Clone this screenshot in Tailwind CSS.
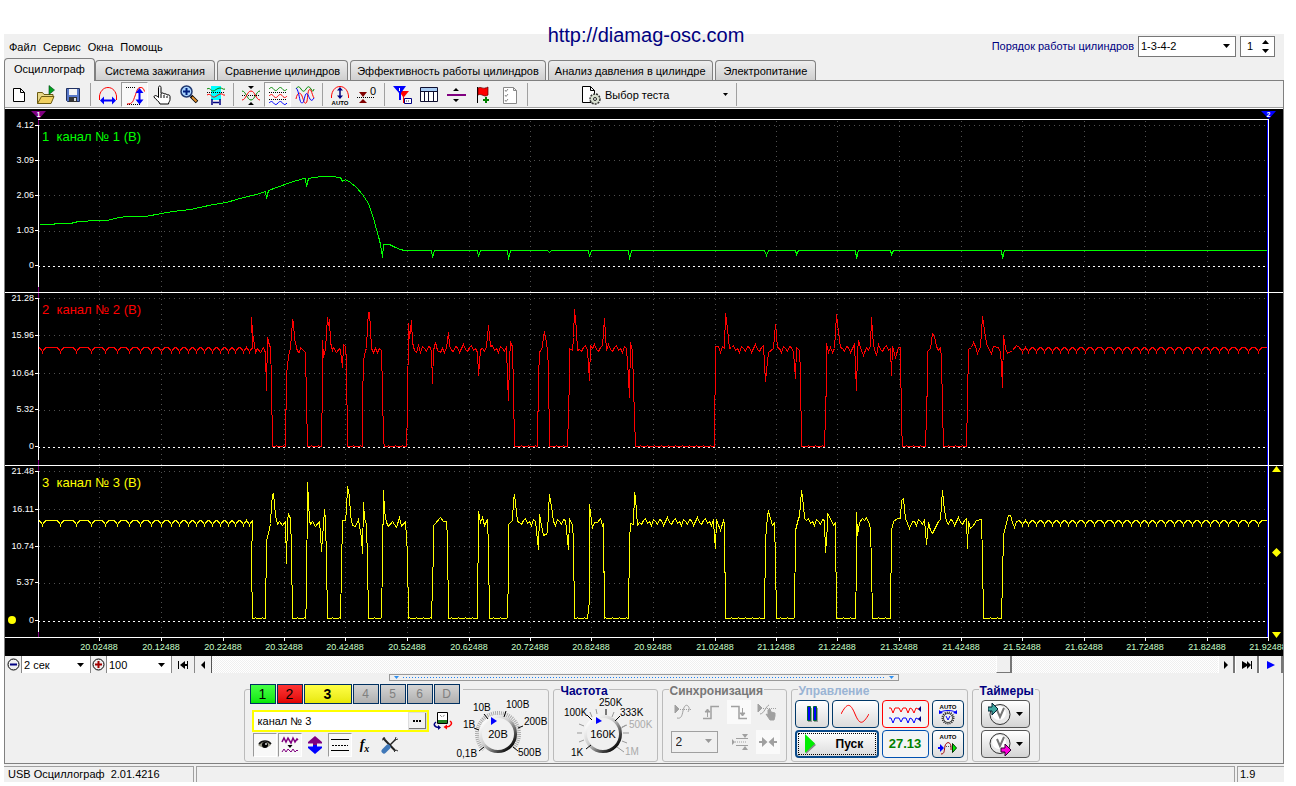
<!DOCTYPE html>
<html lang="ru">
<head>
<meta charset="utf-8">
<title>USB Осциллограф</title>
<script src="https://cdn.jsdelivr.net/npm/@tailwindcss/browser@4"></script>
</head>
<body class="bg-white font-['Liberation_Sans',sans-serif] text-[11px] leading-4 text-black">
<div class="relative flex min-h-screen flex-col pt-[34px] pr-3 pb-[5px] pl-1">
  <a href="http://diamag-osc.com" class="absolute top-6 right-1 left-0 z-10 mx-auto w-fit text-xl leading-[22px] text-[#000080]">http://diamag-osc.com</a>
  <div class="flex flex-1 flex-col bg-[#f0f0f0]">

    <!-- Menu and firing order -->
    <header class="flex h-6 items-center justify-between">
      <nav class="flex gap-[7px] pt-0.5 pl-[5px]">
        <button type="button">Файл</button><button type="button">Сервис</button><button type="button">Окна</button><button type="button">Помощь</button>
      </nav>
      <div class="flex items-center gap-1 pr-[9px]">
        <label for="order" class="text-[#000080]">Порядок работы цилиндров</label>
        <div class="relative">
          <select id="order" class="h-[21px] w-[98px] appearance-none border border-[#777] bg-white px-0.5 text-[11px]"><option>1-3-4-2</option></select>
          <svg class="pointer-events-none absolute top-2 right-1.5 h-1 w-[7px]" viewBox="0 0 7 4"><path d="M0 0h7L3.500 4z"/></svg>
        </div>
        <div class="relative">
          <input id="cyl" aria-label="Цилиндр" value="1" class="h-[21px] w-[35px] border border-[#777] bg-white pl-1.5 text-[11px]">
          <svg class="pointer-events-none absolute top-1 right-1.5 h-3.5 w-[7px]" viewBox="0 0 7 14"><path d="M0 4h7L3.500 0zM0 9h7l-3.500 4z"/></svg>
        </div>
      </div>
    </header>

    <!-- Tabs -->
    <div role="tablist" class="flex h-[23px] items-end gap-0.5 border-b border-[#808080]">
      <button role="tab" aria-selected="true" class="-mr-0.5 -mb-px h-[23px] rounded-t-sm border border-b-0 border-[#808080] bg-[#f0f0f0] px-[9px] pb-0.5">Осциллограф</button>
      <button role="tab" class="h-5 rounded-t-sm border border-b-0 border-[#808080] bg-linear-to-b from-[#eee] to-[#cfcfcf] px-[9px]">Система зажигания</button>
      <button role="tab" class="h-5 rounded-t-sm border border-b-0 border-[#808080] bg-linear-to-b from-[#eee] to-[#cfcfcf] px-[7px]">Сравнение цилиндров</button>
      <button role="tab" class="h-5 rounded-t-sm border border-b-0 border-[#808080] bg-linear-to-b from-[#eee] to-[#cfcfcf] px-1.5">Эффективность работы цилиндров</button>
      <button role="tab" class="h-5 rounded-t-sm border border-b-0 border-[#808080] bg-linear-to-b from-[#eee] to-[#cfcfcf] px-1.5">Анализ давления в цилиндре</button>
      <button role="tab" class="h-5 rounded-t-sm border border-b-0 border-[#808080] bg-linear-to-b from-[#eee] to-[#cfcfcf] px-2">Электропитание</button>
    </div>

    <div class="flex flex-1 flex-col border-x border-[#808080]">
    <!-- Toolbar -->
    <div role="toolbar" class="flex h-7 items-center border-b border-white shadow-[inset_0_-1px_0_#a0a0a0]">
      <button aria-label="Новый" class="flex h-[25px] w-[27px] items-center justify-center"><svg class="h-6 w-6" viewBox="0 0 24 24"><path d="M6.500 5.500h7l4 4v9h-11zM13.500 5.500v4h4" fill="#fff" stroke="#000"/></svg></button>
      <button aria-label="Открыть" class="flex h-[25px] w-[27px] items-center justify-center"><svg class="h-6 w-6" viewBox="0 0 24 24"><path d="M3.500 20.500v-11h5l1.500 2h9v3" fill="#e8d888" stroke="#6b5a10"/><path d="M3.500 20.500l4-7h12.500l-3 7z" fill="#f0d060" stroke="#6b5a10"/><path d="M15 2.500v9l5.500-4.500z" fill="#00a020" stroke="#004010" stroke-width=".6"/></svg></button>
      <button aria-label="Сохранить" class="flex h-[25px] w-[27px] items-center justify-center"><svg class="h-6 w-6" viewBox="0 0 24 24"><path d="M5.500 5.500h13v13h-12l-1-1z" fill="#5878c8" stroke="#203060"/><path d="M8 6h8v6H8z" fill="#f4f4f4"/><path d="M8 14h8v5H8z" fill="#333"/><path d="M13 15h2v3h-2z" fill="#ddd"/></svg></button>
      <i class="mr-[3px] ml-1 h-[23px] w-px bg-[#a0a0a0]"></i>
      <button aria-label="Развертка" class="flex h-[25px] w-[27px] items-center justify-center"><svg class="h-6 w-6" viewBox="0 0 24 24" fill="none"><path d="M3.500 17v-4c.5-4 3.500-8.500 8.500-8.500s8 4.500 8.500 8.500v4" stroke="red"/><path d="M7 17.500h10" stroke="#00f" stroke-width="2"/><path d="M4 17.500l4-4v8zM20 17.500l-4-4v8z" fill="#00f"/></svg></button>
      <button aria-label="Усиление" aria-pressed="true" class="flex h-[25px] w-[27px] items-center justify-center border border-[#999] border-r-white border-b-white bg-[#f8f8f8]"><svg class="h-6 w-6 shrink-0" viewBox="0 0 24 24" fill="none"><path d="M3 4.500h9M4 21.500h14" stroke="#000" stroke-dasharray="1 1"/><path d="M4 21c6 0 6-3 8-8s2-8 5-8.500 4 2 4.500 4" stroke="red"/><path d="M16.500 9v8" stroke="#00f" stroke-width="2"/><path d="M16.500 5l4 5h-8zM16.500 21.500l4-5h-8z" fill="#00f"/></svg></button>
      <button aria-label="Рука" class="flex h-[25px] w-[27px] items-center justify-center"><svg class="h-6 w-6" viewBox="0 0 24 24"><path d="M8.500 14.500v-10c0-2 2.500-2 2.500 0v6c1-1 3-.5 3 .5 1-.5 3 0 3 1 1.500-.5 3 0 3 1.500v3c0 2-1.500 2.500-1.500 4.500h-8.500c-1-3-4.500-4.500-6-7 0-2 2.500-2 4.500.5z" fill="#fff" stroke="#000"/><path d="M11 11v4M14 12v3M17 13v2" stroke="#000"/></svg></button>
      <button aria-label="Масштаб" class="flex h-[25px] w-[27px] items-center justify-center"><svg class="h-6 w-6" viewBox="0 0 24 24"><path d="M14 13l6 6" stroke="#000" stroke-width="3.500"/><path d="M15 14l4.500 4.500" stroke="#e09030" stroke-width="2"/><circle cx="9.500" cy="8.500" r="5.500" fill="#a8d4ff" stroke="#203870" stroke-width="1.500"/><path d="M6 8.500h7M9.500 5v7" stroke="#002080" stroke-width="2"/></svg></button>
      <button aria-label="Фрагмент" class="flex h-[25px] w-[27px] items-center justify-center"><svg class="h-6 w-6" viewBox="0 0 24 24" fill="none"><path d="M7 3h10v14H7z" fill="#0ff"/><path d="M3 6c3-2 4 2 6 2s4-3 7-3 3 2 5 1" stroke="#080"/><path d="M3 9.500h18" stroke="#000" stroke-dasharray="1 1"/><path d="M3 12c3-2 4 1 6 2s4-2 7-3 3 2 5 1" stroke="red"/><path d="M8 16v6M16 16v6M9 19.500h6" stroke="#000080" stroke-width="1.500"/></svg></button>
      <i class="mr-[3px] ml-1 h-[23px] w-px bg-[#a0a0a0]"></i>
      <button aria-label="Центр" class="flex h-[25px] w-[27px] items-center justify-center"><svg class="h-6 w-6" viewBox="0 0 24 24" fill="none"><path d="M3 12.500h18" stroke="#000" stroke-dasharray="1 1"/><path d="M3 8c4 0 5 9 9 9s5-9 9-9" stroke="#080"/><path d="M3 17c4 0 5-9 9-9s5 9 9 9" stroke="red"/><path d="M9 3h6l-3 3zM9 22h6l-3-3z" fill="#000"/></svg></button>
      <button aria-label="Раздельно" aria-pressed="true" class="flex h-[25px] w-[27px] items-center justify-center border border-[#999] border-r-white border-b-white bg-[#f8f8f8]"><svg class="h-6 w-6 shrink-0" viewBox="0 0 24 24" fill="none"><path d="M3 6c2-2 3-2 4.500 0s3 2 4.500 0 3-2 4.500 0 3 2 4.500 0" stroke="#080"/><path d="M3 9.500h18M3 16.500h18" stroke="#000" stroke-dasharray="1 1"/><path d="M3 13c2-2 3-2 4.500 0s3 2 4.500 0 3-2 4.500 0 3 2 4.500 0" stroke="red"/><path d="M3 20c2-2 3-2 4.500 0s3 2 4.500 0 3-2 4.500 0 3 2 4.500 0" stroke="#00f"/></svg></button>
      <button aria-label="Наложение" class="flex h-[25px] w-[27px] items-center justify-center"><svg class="h-6 w-6" viewBox="0 0 24 24" fill="none"><path d="M3 6c2-3 3-3 5 0s3 3 5 0 3-3 5 0 2 3 3 0" stroke="#080"/><path d="M3 16c1-6 4-8 6-3s2 8 4 7 1-10 3-13 3 5 5 8" stroke="red"/><path d="M3 5c2 1 3 8 4 12s3 4 4 0 2-9 4-5 3 8 6 3" stroke="#00f"/></svg></button>
      <i class="mr-[3px] ml-1 h-[23px] w-px bg-[#a0a0a0]"></i>
      <button aria-label="Авто" class="flex h-[25px] w-[27px] items-center justify-center"><svg class="h-6 w-6" viewBox="0 0 24 24" fill="none"><path d="M3.500 15v-2c.5-5 3.500-9.500 8.500-9.500s8 4.500 8.500 9.500v2" stroke="red"/><path d="M12 6v8" stroke="#000080" stroke-width="1.500"/><path d="M12 4l3 3.500H9zM12 16l3-3.500H9z" fill="#000080"/><text x="12" y="22" font-size="6" font-weight="bold" text-anchor="middle" fill="#000">AUTO</text></svg></button>
      <button aria-label="Ноль" class="flex h-[25px] w-[27px] items-center justify-center"><svg class="h-6 w-6" viewBox="0 0 24 24"><path d="M4 9h8l-4 5zM4 20h8l-4-4z" fill="#800000"/><path d="M2 14.500h18" stroke="#000" stroke-dasharray="1 1"/><text x="15" y="12" font-size="11" fill="#000">0</text></svg></button>
      <i class="mr-[3px] ml-1 h-[23px] w-px bg-[#a0a0a0]"></i>
      <button aria-label="Фильтр" class="flex h-[25px] w-[27px] items-center justify-center"><svg class="h-6 w-6" viewBox="0 0 24 24"><path d="M9 8h10l-5 6v6h-1v-6z" fill="red"/><path d="M3 3h13l-5 7v7H9v-7z" fill="#00f"/><path d="M9.500 5v3" stroke="#fff"/><path d="M14.500 15.500h7v5h-7z" fill="#fff" stroke="#000080"/><path d="M16 18h4" stroke="#444" stroke-dasharray="1 1"/></svg></button>
      <button aria-label="Таблица" class="flex h-[25px] w-[27px] items-center justify-center"><svg class="h-6 w-6" viewBox="0 0 24 24"><path d="M3.500 4.500h17v14h-17z" fill="#fff" stroke="#101030"/><path d="M4 5h16v3H4z" fill="#a8ccf4"/><path d="M3 8.500h18M7.500 8v10M11.500 8v10M16.500 8v10" stroke="#101030"/></svg></button>
      <button aria-label="Разделить" class="flex h-[25px] w-[27px] items-center justify-center"><svg class="h-6 w-6" viewBox="0 0 24 24"><path d="M3 12h19" stroke="#800080" stroke-width="2"/><path d="M9 8h6l-3-3zM9 16h6l-3 3z"/></svg></button>
      <button aria-label="Метка" class="flex h-[25px] w-[27px] items-center justify-center"><svg class="h-6 w-6" viewBox="0 0 24 24"><path d="M6.500 4v16" stroke="#000"/><path d="M7 5c3-2 5 2 10-1v8c-4 3-6-2-10 0z" fill="red" stroke="#500" stroke-width=".7"/><path d="M15 14v6M12 17h6" stroke="#008000" stroke-width="2"/></svg></button>
      <button aria-label="Протокол" class="flex h-[25px] w-[27px] items-center justify-center"><svg class="h-6 w-6" viewBox="0 0 24 24" fill="none"><path d="M5.500 4.500h10l3 3v13h-13zM15.500 4.500v3h3" fill="#fff" stroke="#888"/><path d="M7 7l1 1.500 2-2.500M7 12l1 1.500 2-2.500M7 17l1 1.500 2-2.500" stroke="#888"/></svg></button>
      <i class="mr-[3px] ml-1 h-[23px] w-px bg-[#a0a0a0]"></i>
      <button class="ml-10 flex h-[25px] w-[165px] items-center gap-0.5 pl-2"><svg class="h-6 w-6" viewBox="0 0 24 24"><path d="M3.500 3.500h8l4 4v12h-12zM11.500 3.500v4h4" fill="#fff" stroke="#000"/><circle cx="16" cy="16" r="5" fill="#d8e0d0" stroke="#333" stroke-width="1.500" stroke-dasharray="2 1"/><circle cx="16" cy="16" r="1.500" fill="#fff" stroke="#222"/></svg>Выбор теста<svg class="mr-2 ml-auto h-[3px] w-[5px]" viewBox="0 0 5 3"><path d="M0 0h5L2.500 3z"/></svg></button>
      <i class="h-[23px] w-px bg-[#a0a0a0]"></i>
    </div>

    <!-- Oscilloscope display -->
    <div id="scope" class="grid min-h-[547px] flex-1 grid-cols-[33px_1fr_14px] grid-rows-[11fr_173fr_173fr_172fr_18fr] overflow-hidden bg-black text-[9px] leading-3 text-white">
      <div></div>
      <div class="relative border-b border-white">
        <svg class="absolute top-0.5 -left-2 h-[9px] w-4" viewBox="0 0 16 9"><path d="M1 0h15l-7 8z" fill="#800080"/><text x="8.500" y="6" font-size="7" font-weight="bold" text-anchor="middle" fill="#fff">1</text></svg>
        <svg class="absolute top-0.5 -right-2 h-[9px] w-4" viewBox="0 0 16 9"><path d="M0 0h15l-7 8z" fill="#00f"/><text x="7.500" y="6" font-size="7" font-weight="bold" text-anchor="middle" fill="#fff">2</text></svg>
      </div>
      <div></div>
    </div>

    <!-- Zoom and scroll -->
    <div class="flex h-[17px] items-stretch bg-[#f0f0f0]">
      <button aria-label="Уменьшить" class="flex w-[17px] items-center justify-center border-r border-[#888]"><svg class="h-[15px] w-[15px]" viewBox="0 0 15 15"><circle cx="7.500" cy="7.500" r="5.500" fill="#f0f0f0" stroke="#000"/><path d="M4 7.500h7" stroke="#000080" stroke-width="2"/></svg></button>
      <div class="relative w-[68px]"><select aria-label="Развертка" class="h-full w-full appearance-none bg-white px-0.5 text-[11px]"><option>2 сек</option></select><svg class="pointer-events-none absolute top-[7px] right-1.5 h-1 w-[7px]" viewBox="0 0 7 4"><path d="M0 0h7L3.500 4z"/></svg></div>
      <button aria-label="Увеличить" class="flex w-[17px] items-center justify-center border-x border-[#888]"><svg class="h-[15px] w-[15px]" viewBox="0 0 15 15"><circle cx="7.500" cy="7.500" r="5.500" fill="#f0f0f0" stroke="#000"/><path d="M4 7.500h7M7.500 4v7" stroke="#a00000" stroke-width="2"/></svg></button>
      <div class="relative w-[64px]"><select aria-label="Масштаб" class="h-full w-full appearance-none bg-white px-0.5 text-[11px]"><option>100</option></select><svg class="pointer-events-none absolute top-[7px] right-1.5 h-1 w-[7px]" viewBox="0 0 7 4"><path d="M0 0h7L3.500 4z"/></svg></div>
      <button aria-label="В начало" class="flex w-6 items-center justify-center border-r border-l border-[#888]"><svg class="h-2 w-3" viewBox="0 0 12 8"><path d="M1 0h1v8H1zM3 4l5-4v3h3v2H8v3zM10 0h1v8h-1z"/></svg></button>
      <button aria-label="Назад" class="flex w-[17px] items-center justify-center border-r border-[#555]"><svg class="h-2 w-1" viewBox="0 0 4 8"><path d="M4 0v8L0 4z"/></svg></button>
      <div class="flex flex-1 justify-end bg-[repeating-conic-gradient(#fff_0_25%,#efefef_0_50%)] bg-[length:2px_2px] pr-[206px]">
        <button aria-label="Ползунок" class="w-4 border-r-2 border-b border-l border-[#777] border-l-white bg-[#f0f0f0]"></button>
      </div>
      <button aria-label="Вперед" class="flex w-[17px] items-center justify-center border-r-2 border-l border-[#777] border-l-white"><svg class="h-2 w-1" viewBox="0 0 4 8"><path d="M0 0v8L4 4z"/></svg></button>
      <button aria-label="В конец" class="flex w-6 items-center justify-center border-r-2 border-l border-[#777] border-l-white"><svg class="h-2 w-3" viewBox="0 0 12 8"><path d="M10 0h1v8h-1zM1 0l5 3V0l4 4-4 4V5L1 8z"/></svg></button>
      <button aria-label="Воспроизвести" class="flex w-6 items-center justify-center border-r-2 border-l border-[#777] border-l-white"><svg class="h-2 w-2" viewBox="0 0 8 8"><path d="M0 0v8l8-4z" fill="#00f"/></svg></button>
    </div>

    <!-- Panel splitter -->
    <button aria-label="Свернуть панель" class="mx-auto mt-px flex h-[7px] w-[510px] items-center border border-[#999] px-1"><svg class="h-[3px] w-[5px]" viewBox="0 0 5 3"><path d="M0 0h5L2.500 3z" fill="#2e8ff0"/></svg><i class="mx-1 h-px flex-1 bg-[repeating-linear-gradient(90deg,#1e80f0_0_1px,transparent_1px_3px)]"></i><svg class="h-[3px] w-[5px]" viewBox="0 0 5 3"><path d="M0 0h5L2.500 3z" fill="#2e8ff0"/></svg></button>

    <!-- Control panel -->
    <div class="flex justify-center gap-1 pt-2 pr-[5px] pb-px">
      <fieldset aria-label="Каналы" class="relative flex h-[73px] rounded-[3px] border border-[#bbb]">
        <div class="-mt-1.5 w-[218px] pl-[5px]">
          <div class="flex gap-px bg-[#f0f0f0]">
            <button class="h-5 w-[26px] border border-[#003060] bg-linear-to-b from-[#44ff44] to-[#00e800] text-sm leading-4">1</button>
            <button class="h-5 w-[26px] border border-[#003060] bg-linear-to-b from-[#f33] to-[#e00000] text-sm leading-4">2</button>
            <button class="h-5 w-12 border border-[#003060] bg-linear-to-b from-[#ff4] to-[#e8e800] text-sm leading-4 font-bold">3</button>
            <button class="h-5 w-[26px] border border-[#003060] bg-linear-to-b from-[#d4d4d4] to-[#b0b0b0] text-xs leading-4 text-[#808080]">4</button>
            <button class="h-5 w-[26px] border border-[#003060] bg-linear-to-b from-[#d4d4d4] to-[#b0b0b0] text-xs leading-4 text-[#808080]">5</button>
            <button class="h-5 w-[26px] border border-[#003060] bg-linear-to-b from-[#d4d4d4] to-[#b0b0b0] text-xs leading-4 text-[#808080]">6</button>
            <button class="h-5 w-[26px] border border-[#003060] bg-linear-to-b from-[#d4d4d4] to-[#b0b0b0] text-xs leading-4 text-[#808080]">D</button>
          </div>
          <div class="mt-1.5 flex items-center gap-1 pl-0.5">
            <div class="flex h-[22px] w-[177px] items-center border-2 border-[#ff0] bg-white pr-px">
              <input aria-label="Имя канала" value="канал № 3" class="w-full min-w-0 flex-1 bg-white pl-1 text-[11px]">
              <button aria-label="Выбрать" class="flex h-4 w-[17px] shrink-0 items-center justify-center gap-px border-r border-b border-[#777] bg-[#f0f0f0] shadow-[0_0_0_1px_#ddd]"><i class="h-0.5 w-0.5 bg-black"></i><i class="h-0.5 w-0.5 bg-black"></i><i class="h-0.5 w-0.5 bg-black"></i></button>
            </div>
            <button aria-label="Сменить"><svg class="h-5 w-5" viewBox="0 0 20 20" fill="none"><path d="M4.500 1.500h10v11h-10z" fill="#fff" stroke="#000"/><path d="M5 9h9v3H5z" fill="#208020"/><path d="M7 4l2 2 3-2" stroke="#555" stroke-dasharray="1 1"/><path d="M3 11c-3 2-2 5 3 5.500" stroke="#000080" stroke-width="1.500"/><path d="M5 14l3 2.500-3 2.500z" fill="#000080"/><path d="M17 10c3 2 1 5.500-4 6" stroke="red" stroke-width="1.500"/><path d="M14 13.500l-3.500 2.500 3.500 2.500z" fill="red"/></svg></button>
          </div>
          <div class="mt-px flex gap-px pl-[3px]">
            <button aria-label="Показать" aria-pressed="true" class="flex h-6 w-6 items-center justify-center border border-[#999] border-r-white border-b-white bg-[#f8f8f8]"><svg class="h-4 w-4" viewBox="0 0 16 16"><path d="M1 8c2-4 10-5 13-1-1 4-8 5-13 1z" fill="#998"/><path d="M2 7c3-4 9-4 12 0" fill="none" stroke="#111" stroke-width="1.500"/><circle cx="8" cy="8" r="3"/><circle cx="9" cy="7" r="1" fill="#ddd"/></svg></button>
            <button aria-label="Сигнал" aria-pressed="true" class="flex h-6 w-6 items-center justify-center border border-[#999] border-r-white border-b-white bg-[#f8f8f8]"><svg class="h-[18px] w-[18px]" viewBox="0 0 18 18" fill="none"><path d="M1 6l2-4 2 4 2-4 3 5 2-5 2 4 2-3 1 1" stroke="#800080" stroke-width="1.500"/><path d="M1 16l2-3 2 3 2-3 3 3 2-3 2 3 2-2 1 1" stroke="#800080"/><path d="M6.500 9h5L9 12z" fill="#000"/></svg></button>
            <button aria-label="Смещение" class="flex h-6 w-6 items-center justify-center"><svg class="h-5 w-4" viewBox="0 0 16 20"><path d="M8 1l7 6v1.500H10V10H6V8.500H1V7z" fill="#800080"/><path d="M8 19l7-6v-1.500H10V10H6v1.500H1V13z" fill="#00f"/></svg></button>
            <button aria-label="Линии" aria-pressed="true" class="flex h-6 w-6 items-center justify-center border border-[#999] border-r-white border-b-white bg-[#f8f8f8]"><svg class="h-4 w-[18px]" viewBox="0 0 18 16" stroke="#000"><path d="M0 2.500h18M0 13.500h18"/><path d="M1 8.500h16" stroke-dasharray="2 1"/></svg></button>
            <button aria-label="Функция" class="h-6 w-6 font-['Liberation_Serif',serif] text-sm leading-4 font-bold italic">f<sub class="text-[10px]">x</sub></button>
            <button aria-label="Настройка" class="flex h-6 w-6 items-center justify-center"><svg class="h-[18px] w-[18px]" viewBox="0 0 18 18" fill="none"><path d="M2 2l12 12.500" stroke="#222" stroke-width="2"/><path d="M8 10l7-7" stroke="#222" stroke-width="1.500"/><path d="M15 1l-1 3 3-1M1 4l3-1-1-2M13 16l2-2 2 1" stroke="#333"/><path d="M3 15l4-4" stroke="#4078b8" stroke-width="5" stroke-linecap="round"/></svg></button>
          </div>
        </div>
        <svg class="h-[71px] w-[85px]" viewBox="463 690 85 71" font-size="10">
          <defs><linearGradient id="rim" x1="0" y1="0" x2="1" y2="1"><stop offset=".1" stop-color="#fff"/><stop offset=".45" stop-color="#ccc"/><stop offset=".9" stop-color="#000"/></linearGradient></defs>
          <circle cx="498" cy="734" r="21" fill="none" stroke="#aaa" stroke-width="4" stroke-dasharray="1 1" pathLength="132"/>
          <path d="M478 757l10-13 21 0 12 12v5h-43z" fill="#f0f0f0"/>
          <circle cx="498" cy="734" r="17.500" fill="#f0f0f0" stroke="url(#rim)" stroke-width="3"/>
          <path d="M491 717v8l6-4z" fill="#00f"/>
          <path d="M479 751l5-4M474 728l5 2M484 714l4 5M506 711l-2 6M523 726l-5 2M518 751l-5-4" stroke="#000"/>
          <text x="498" y="738" font-size="11" text-anchor="middle">20В</text>
          <text x="473" y="711">10В</text><text x="506" y="708">100В</text><text x="463" y="728">1В</text><text x="524" y="725">200В</text><text x="518" y="756">500В</text>
        </svg>
        <span class="absolute bottom-0 left-[212px] text-[10px] leading-[14px]">0,1В</span>
      </fieldset>

      <fieldset class="relative h-[73px] rounded-[3px] border border-[#bbb]">
        <legend class="absolute -top-[5px] left-1.5 bg-[#f0f0f0] px-px text-xs leading-3 font-bold text-[#000080]">Частота</legend>
        <svg class="relative h-[71px] w-[103px]" viewBox="553 690 103 71" font-size="10">
          <g stroke="#999"><path d="M578 742l5-2M576 733h5M578 724l5 2M589 712l2 5M595 709l1 5M613 712l-2 5M621 741l5 2M622 733h6M621 727l5-2M616 747l7 5M619 729l6-4"/></g>
          <circle cx="602" cy="734" r="17.500" fill="#f0f0f0" stroke="url(#rim)" stroke-width="3"/>
          <path d="M595 717v7l6-3z" fill="#00f"/>
          <path d="M585 749l5-4M586 715l5 5M605 709v6M619 716l-5 5" stroke="#000"/>
          <text x="602" y="738" font-size="11" text-anchor="middle">160K</text>
          <text x="598" y="706">250K</text><text x="563" y="716">100K</text><text x="619" y="716">333K</text><text x="628" y="728" fill="#aaa">500K</text><text x="624" y="755" fill="#aaa">1M</text><text x="570" y="756">1K</text>
        </svg>
      </fieldset>

      <fieldset class="relative h-[73px] w-[125px] rounded-[3px] border border-[#bbb] pt-2.5 pl-2">
        <legend class="absolute -top-[5px] left-1.5 bg-[#f0f0f0] px-px text-xs leading-3 font-bold text-[#777]">Синхронизация</legend>
        <div class="flex gap-1">
          <button disabled aria-label="Уровень" class="flex h-6 w-6 items-center justify-center"><svg class="h-5 w-[18px]" viewBox="0 0 18 20" fill="none" stroke="#a0a0a0"><path d="M1 3v8l4-4z" fill="#a0a0a0"/><path d="M4 7.500h14" stroke-dasharray="1 1"/><path d="M3 16c4 1 5-2 6-7s3-7 5-5 1 4 0 6"/></svg></button>
          <button disabled aria-label="Фронт" class="flex h-6 w-6 items-center justify-center"><svg class="h-4 w-[18px]" viewBox="0 0 18 16" fill="none" stroke="#a0a0a0"><path d="M1 14.500h8V2.500h8" stroke-width="1.500"/><path d="M5.500 13V6M3 8l2.500-3L8 8z" fill="#a0a0a0"/></svg></button>
          <button disabled aria-label="Спад" class="flex h-6 w-6 items-center justify-center bg-[#fafafa]"><svg class="h-4 w-[18px]" viewBox="0 0 18 16" fill="none" stroke="#a0a0a0"><path d="M1 2.500h8v12h8" stroke-width="1.500"/><path d="M12.500 4v7M10 9l2.500 3L15 9z" fill="#a0a0a0"/></svg></button>
          <button disabled aria-label="Вручную" class="flex h-6 w-6 items-center justify-center"><svg class="h-5 w-5" viewBox="0 0 20 20" fill="none" stroke="#a0a0a0"><path d="M1 2v8l4-4z" fill="#a0a0a0"/><path d="M4 6.500h15" stroke-dasharray="1 1"/><path d="M3 12c4 0 6-8 9-9"/><path d="M11 8v5l-2-1 4 6h4l1-4v-3l-4-1-1-3z" fill="#a0a0a0"/></svg></button>
        </div>
        <div class="mt-1.5 flex items-center gap-2.5">
          <div class="relative"><select aria-label="Канал синхронизации" class="block h-[22px] w-[47px] appearance-none border border-[#a0a0a0] bg-[#f0f0f0] pl-1 text-xs text-[#222]"><option>2</option></select><svg class="pointer-events-none absolute top-2 right-1.5 h-1 w-[7px]" viewBox="0 0 7 4"><path d="M0 0h7L3.500 4z" fill="#999"/></svg></div>
          <div class="flex gap-1">
            <button disabled aria-label="Диапазон" class="flex h-6 w-6 items-center justify-center"><svg class="h-4 w-[18px]" viewBox="0 0 18 16" fill="#a0a0a0" stroke="#a0a0a0"><path d="M1 5v6l3-3zM11 0h6l-3 4zM11 16h6l-3-4z" stroke="none"/><path d="M5 4.500h12M5 11.500h12"/><path d="M4 8h12" stroke-dasharray="1 1"/></svg></button>
            <button disabled aria-label="Центр" class="flex h-6 w-6 items-center justify-center bg-[#fafafa]"><svg class="h-3 w-[18px]" viewBox="0 0 18 12"><path d="M0 5h3V1l5.500 5L3 11V7H0zM18 5h-3V1L9.500 6l5.500 5V7h3z" fill="#a0a0a0"/></svg></button>
          </div>
        </div>
      </fieldset>

      <fieldset class="relative h-[73px] rounded-[3px] border border-[#bbb] px-[3px] pt-2.5">
        <legend class="absolute -top-[5px] left-1.5 bg-[#f0f0f0] px-px text-xs leading-3 font-bold text-[#9ab4d4]">Управление</legend>
        <div class="grid grid-cols-[34px_47px_47px_32px] gap-x-[3px] gap-y-0.5">
          <button aria-label="Пауза" class="flex h-7 items-center justify-center rounded-sm border border-[#003868] bg-linear-to-b from-white to-[#dcdcdc]"><svg class="h-4 w-3" viewBox="0 0 12 16"><path d="M2 2h4v14H2zM8 2h4v14H8z" fill="#999"/><path d="M1.500.5h3v14h-3zM7.500.5h3v14h-3z" fill="#00f" stroke="#063"/></svg></button>
          <button aria-label="Однократно" class="flex h-7 items-center justify-center rounded-sm border border-[#003868] bg-linear-to-b from-white to-[#dcdcdc]"><svg class="h-5 w-7" viewBox="0 0 28 20"><path d="M0 10C6-1 9-2 14 10s8 10 14 0" fill="none" stroke="red"/></svg></button>
          <button aria-label="Поток" class="flex h-7 items-center justify-center rounded-sm border border-[red] bg-[#f4f4f4]"><svg class="h-5 w-8" viewBox="0 0 32 20" fill="none"><path d="M0 4h2l2 5 2-5h4l2 4 2-4h3l2 5 2-5 2 1 2 4 2-5 2 1 2 0" stroke="red"/><path d="M0 14h2l2 5 2-5h4l2 4 2-4h3l2 5 2-5 2 1 2 4 2-5 2 1 2 0" stroke="#00f"/><path d="M32 2v6l-3-3zM32 12v6l-3-3z" fill="#000080"/></svg></button>
          <button aria-label="Авто усиление" class="flex h-7 items-center justify-center rounded-sm border border-[#003868] bg-linear-to-b from-white to-[#dcdcdc]"><svg class="h-6 w-5" viewBox="0 0 20 24" fill="none"><text x="10" y="7" font-size="6" font-weight="bold" text-anchor="middle" fill="#000">AUTO</text><circle cx="10" cy="16" r="5.500" stroke="#222" stroke-width="2" stroke-dasharray="1 1"/><circle cx="10" cy="16" r="4.500" fill="#f0f0f0" stroke="#444"/><path d="M8 14l2 4 2-4M3 10c3-2 11-2 14 0" stroke="#00f"/><path d="M1 12V8l4 3zM19 12V8l-4 3z" fill="#00f"/></svg></button>
          <button class="col-span-2 flex h-7 items-center gap-5 rounded-sm border-2 border-[#0a4a8a] bg-linear-to-b from-white to-[#dcdcdc] pl-2 text-xs font-bold outline outline-1 outline-offset-[-4px] outline-black outline-dotted"><svg class="h-5 w-[11px]" viewBox="0 0 11 20"><path d="M1 2v18l10-9z" fill="#888"/><path d="M0 0v19l10-9.500z" fill="#0e0"/></svg>Пуск</button>
          <output class="flex h-7 items-center justify-center rounded-sm border border-[#0050b0] bg-[#f4f4f4] text-[13px] font-bold text-[#008000]">27.13</output>
          <button aria-label="Авто пуск" class="flex h-7 items-center justify-center rounded-sm border border-[#003868] bg-linear-to-b from-white to-[#dcdcdc]"><svg class="h-6 w-5" viewBox="0 0 20 24" fill="none"><text x="10" y="7" font-size="6" font-weight="bold" text-anchor="middle" fill="#000">AUTO</text><path d="M3 22c4 0 3-4 4-8s5-5 6 0v4" stroke="#a00000"/><path d="M0 15h2v-3l4 4-4 4v-3H0z" fill="#00f"/><path d="M8 14.500h5" stroke="#555" stroke-dasharray="1 1"/><path d="M14.500 11.500v9l4-4.500z" fill="#0e0" stroke="#030"/></svg></button>
        </div>
      </fieldset>

      <fieldset class="relative h-[73px] w-[68px] rounded-[3px] border border-[#bbb] pt-2.5 pl-2">
        <legend class="absolute -top-[5px] left-1.5 bg-[#f0f0f0] px-px text-xs leading-3 font-bold text-[#000080]">Таймеры</legend>
        <div class="grid w-[49px] gap-0.5">
          <button aria-label="Таймер пуска" class="flex h-7 items-center justify-between rounded-sm border border-[#555] bg-linear-to-b from-white to-[#d4d4d4] px-1.5"><svg class="h-6 w-6" viewBox="0 0 24 24"><circle cx="12" cy="12.500" r="10" fill="#e8e8e8" stroke="#333"/><circle cx="11" cy="11" r="7" fill="#fff"/><path d="M9 8l3 7 4-9" fill="none" stroke="#777" stroke-width="2"/><path d="M0 5h4V1l6 6-6 6V9H0z" fill="#3fa8a0" stroke="#023"/></svg><svg class="h-1 w-[7px]" viewBox="0 0 7 4"><path d="M0 0h7L3.500 4z"/></svg></button>
          <button aria-label="Таймер остановки" class="flex h-7 items-center justify-between rounded-sm border border-[#555] bg-linear-to-b from-white to-[#d4d4d4] px-1.5"><svg class="h-6 w-6" viewBox="0 0 24 24"><circle cx="12" cy="11.500" r="10" fill="#e8e8e8" stroke="#333"/><circle cx="11" cy="10" r="7" fill="#fff"/><path d="M9 7l3 7 4-9" fill="none" stroke="#777" stroke-width="2"/><path d="M13 16h4v-4l6 6-6 6v-4h-4z" fill="#f0d" stroke="#303"/></svg><svg class="h-1 w-[7px]" viewBox="0 0 7 4"><path d="M0 0h7L3.500 4z"/></svg></button>
        </div>
      </fieldset>
    </div>
    </div>

    <!-- Status bar -->
    <footer class="flex h-[19px] gap-0.5 border-t border-[#808080] pt-0.5 leading-[15px]">
      <div class="w-[190px] border-t border-r border-[#a0a0a0] pl-1 whitespace-pre">USB Осциллограф  2.01.4216</div>
      <div class="flex-1 border-t border-r border-l border-[#a0a0a0]"></div>
      <div class="w-[47px] border-t border-l border-[#a0a0a0] pl-0.5">1.9</div>
    </footer>
  </div>
</div>

<script>
// Trace notation: "x,y" is a sample; N = rough level until x, L = low level until x, R = idle ripple until x.
const DIPS = [42,60,76,91,105,117,129,140,151,161,171,179,188,196,204,212,220,228,235,243,249,
  1022,1028,1036,1044,1052,1060,1068,1076,1085,1094,1104,1114,1122,1131,1140,1148,1156,1165,1174,1183,1192,1201,1210,1219,1228,1238,1248,1258];
const ROUGH = [1,4,-1,0,5,1,-3,2,4,0,-2,3,1,5,-1];
const CHANNELS = [
  {n: 1, color: '#0f0', text: 'text-[#0f0]', top: 120, h: 172, hi: 250, lo: 250,
   ticks: [['4.12',125],['3.09',160],['2.06',195],['1.03',231],['0',266]],
   d: '39,224 53,224 55,223 70,223 78,221 97,220 107,220 118,217 127,216 145,216 161,213 172,211 190,209 213,204 226,202 243,197 256,194 265,191 266,198 268,190 279,186 290,182 303,178 305,178 306,186 308,178 313,177 323,176 330,176 340,177 342,181 345,179 350,182 356,187 362,194 368,203 373,218 378,236 380,244 382,257 383,244 389,244 395,247 400,249 404,250 431,250 432,257 434,250 477,250 478,256 480,250 507,250 508,259 510,250 547,250 549,252 551,250 588,250 589,256 591,250 628,250 629,259 631,250 764,250 766,255 768,250 795,250 796,254 798,250 855,250 856,258 858,250 890,250 891,254 893,250 1001,250 1002,258 1004,250 1267,250'},
  {n: 2, color: '#f00', text: 'text-[#f00]', top: 293, h: 172, hi: 347, lo: 446,
   ticks: [['21.28',298],['15.96',335],['10.64',373],['5.32',410],['0',447]],
   d: 'R249 251,317 252,332 254,345 255,352 257,348 260,352 263,347 264,350 265,352 266,390 267,337 269,345 270,347 271,380 272,446 L285 286,374 288,356 290,347 291,335 292,320 293,322 294,338 296,347 297,351 299,352 300,347 303,350 305,352 306,400 307,446 L321 322,380 322,340 323,357 325,348 327,317 328,325 329,319 330,342 332,350 333,347 336,352 339,348 340,350 342,367 343,344 345,346 346,360 347,446 L362 362,403 363,360 365,350 366,348 367,325 368,312 369,312 370,328 371,348 373,352 375,348 377,352 379,348 381,350 382,390 383,440 384,446 L406 407,410 408,323 409,338 411,320 412,342 414,350 416,352 418,345 N430 431,351 432,383 433,350 435,342 437,350 440,352 442,348 444,352 446,347 448,332 449,345 451,350 N477 478,375 480,349 N486 488,325 490,346 N506 507,378 508,400 509,360 510,342 512,346 513,390 514,446 L537 538,378 539,352 542,347 543,335 544,332 546,342 547,350 548,369 549,446 L567 569,378 569,348 572,350 573,337 574,309 576,330 577,350 N588 589,380 590,345 N603 604,318 606,350 N627 628,377 629,397 630,342 632,350 633,386 635,446 L714 715,346 718,346 N724 725,313 727,328 729,348 N764 765,381 766,370 768,352 773,348 775,324 777,347 N794 795,378 796,347 799,350 800,372 801,446 L824 826,380 826,343 828,352 N834 836,314 838,332 840,347 N854 856,390 857,352 858,340 861,350 863,355 866,347 868,350 870,345 871,317 873,345 876,355 N890 891,375 892,346 895,357 898,347 900,347 901,425 902,446 L925 927,380 927,351 930,348 932,333 934,336 936,346 938,350 940,347 941,358 942,408 943,446 L966 967,400 968,349 971,347 973,342 975,346 977,353 980,346 982,316 984,330 986,343 988,348 991,353 993,346 998,347 1000,352 1001,365 1002,387 1003,335 1005,348 1007,353 1012,350 1016,345 R1267'},
  {n: 3, color: '#ff0', text: 'text-[#ff0]', top: 466, h: 171, hi: 520, lo: 618,
   ticks: [['21.48',471],['16.11',509],['10.74',546],['5.37',583],['0',621]],
   d: 'R250 251,563 252,618 L265 266,540 268,533 270,523 271,505 272,494 273,493 275,515 277,524 279,521 282,525 285,521 286,563 287,520 288,514 290,518 291,548 292,618 L305 306,600 307,482 309,520 310,524 312,521 315,526 319,521 320,533 321,551 323,524 324,509 325,520 326,560 327,618 L340 342,520 345,520 346,510 347,486 349,496 350,515 352,525 355,526 358,519 361,537 362,553 363,502 364,518 366,524 367,560 368,618 L381 382,560 383,490 384,510 386,522 388,526 392,521 396,527 399,517 401,526 405,521 407,553 408,618 L431 433,550 433,525 435,523 440,517 443,521 446,521 447,538 448,618 L477 478,511 480,522 482,517 484,525 487,519 488,548 489,618 L507 508,572 508,524 512,520 513,500 514,494 516,512 517,521 N536 538,549 539,514 541,525 543,535 547,533 548,510 549,494 551,506 553,521 N566 568,549 569,518 572,525 573,540 574,618 L587 589,600 589,504 591,521 592,527 594,522 597,522 600,518 602,525 603,523 604,618 L628 629,540 630,523 633,524 634,492 635,497 637,525 N713 714,537 715,548 716,519 720,530 723,520 724,524 725,618 L764 765,540 767,515 768,511 770,518 772,525 774,522 775,560 776,618 L794 795,530 798,518 799,516 801,490 803,505 804,518 N824 825,552 827,525 827,513 830,518 833,525 835,522 836,618 L855 856,566 856,512 857,535 859,522 862,518 864,520 866,517 869,524 870,528 871,565 872,618 L890 891,530 893,521 897,518 900,518 901,500 903,498 905,518 907,523 909,528 912,521 N925 926,544 928,522 930,530 932,533 936,525 938,521 940,519 942,490 944,510 946,521 N966 967,548 968,521 970,528 973,525 976,520 981,519 982,558 983,618 L1001 1002,578 1003,535 1005,526 1008,515 1010,515 1012,522 1014,527 1016,521 R1267'}
];
function trace(c) {
  const pts = []; let x = 39;
  const add = (a, b) => { pts.push((a + .5) + ',' + (b + .5)); x = a; };
  for (const t of c.d.split(' ')) {
    const k = t[0], end = +t.slice(1);
    if (k === 'N') for (let i = x + 2, j = x; i <= end; i += 2, j++) add(i, c.hi + ROUGH[j % ROUGH.length]);
    else if (k === 'L') { const s = x; for (let i = s; i <= end; i++) add(i, c.lo - (i % 7 === 3 ? 1 : 0)); }
    else if (k === 'R') {
      for (const p of DIPS) if (p >= x && p <= end) { add(p - 3, c.hi); add(p - 2, c.hi + 2); add(p - 1, c.hi + 2); add(p, c.hi + 5); add(p + 1, c.hi + 2); add(p + 2, c.hi + 2); add(p + 3, c.hi); }
      if (end > 1000) add(end, c.hi);
    } else { const [a, b] = t.split(','); add(+a, +b); }
  }
  return pts.join(' ');
}
const XS = [99,161,223,284,345,407,469,530,591,653,715,776,837,899,961,1022,1084,1145,1207,1268];
let html = '';
for (const c of CHANNELS) {
  const pc = y => ((y - c.top) / (c.h + 1) * 100) + '%';
  html += `<div class="relative border-b border-white">` + c.ticks.map(([t, y]) =>
    `<span class="absolute right-1 -translate-y-1/2" style="top:${pc(y)}">${t}</span><i class="absolute right-0 h-px w-[3px] bg-white" style="top:${pc(y)}"></i>`).join('') +
    (c.n === 3 ? `<i class="absolute left-[3px] h-2 w-2 -translate-y-1/2 rounded-full bg-[#ff0]" style="top:${pc(621)}"></i>` : '') + `</div>`;
  const line = (x1, y1, x2, y2, s, d) => `<path d="M${x1} ${y1}L${x2} ${y2}" stroke="${s}"${d ? ` stroke-dasharray="${d}"` : ''} vector-effect="non-scaling-stroke"/>`;
  html += `<div class="relative border-b border-white"><svg class="absolute inset-0 h-full w-full" viewBox="38 ${c.top} 1231 ${c.h}" preserveAspectRatio="none" fill="none" shape-rendering="crispEdges">` +
    c.ticks.map(([t, y]) => t === '0' ? line(38, y + .5, 1267, y + .5, '#fff', '2 3') : line(39, y + .5, 1267, y + .5, '#505050', '1 4')).join('') +
    XS.slice(0, -1).map(x => line(x + .5, c.top + 1, x + .5, c.top + c.h, '#505050', '1 4')).join('') +
    `<polyline points="${trace(c)}" stroke="${c.color}" vector-effect="non-scaling-stroke"/>` +
    line(38.5, c.top, 38.5, c.top + c.h, '#fff') + line(38.5, c.top, 38.5, c.top + 5, '#800080') + line(38.5, c.top + c.h - 5, 38.5, c.top + c.h, '#800080') +
    line(1267.5, c.top, 1267.5, c.top + c.h, '#00f') + line(1268.5, c.top, 1268.5, c.top + c.h, '#fff') +
    `</svg><span class="absolute top-[9px] left-1 text-[13px] leading-4 whitespace-pre ${c.text}">${c.n}  канал № ${c.n} (В)</span></div>`;
  html += c.n < 3 ? `<div class="border-b border-white"></div>` :
    `<div class="flex flex-col items-center justify-between"><svg class="h-1.5 w-[9px]" viewBox="0 0 9 6"><path d="M0 6h9L4.500 0z" fill="#ff0"/></svg><svg class="h-[9px] w-[9px]" viewBox="0 0 9 9"><path d="M4.500 0L9 4.500 4.500 9 0 4.500z" fill="#ff0"/></svg><svg class="h-1.5 w-[9px]" viewBox="0 0 9 6"><path d="M0 0h9L4.500 6z" fill="#ff0"/></svg></div>`;
}
html += `<div></div><div class="relative text-[#c8ffc8]">` + XS.map((x, i) =>
  `<i class="absolute top-0 h-[3px] w-px bg-white" style="left:${(x - 38) / 12.31}%"></i><span class="absolute top-[3px] -translate-x-1/2" style="left:${(x - 38) / 12.31}%">${(20.02488 + i / 10).toFixed(5)}</span>`).join('') + `</div><div></div>`;
document.getElementById('scope').insertAdjacentHTML('beforeend', html);
</script>
</body>
</html>
